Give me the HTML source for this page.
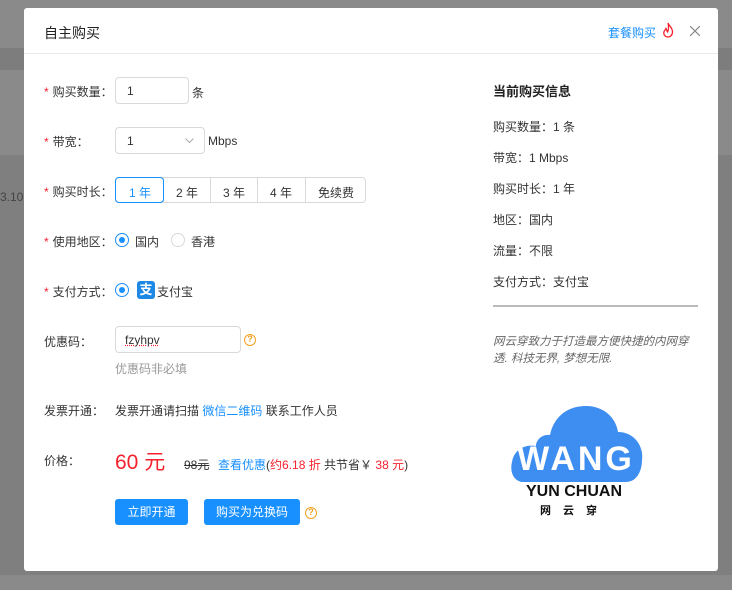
<!DOCTYPE html>
<html style="background:#8a8a8a"><head><meta charset="utf-8"><style>
*{box-sizing:border-box;margin:0;padding:0}
body{width:732px;height:590px;overflow:hidden;background:#8a8a8a;font-family:"Liberation Sans","Noto Sans CJK SC",sans-serif;font-size:12px;color:#333;position:relative}
.a{position:absolute;white-space:nowrap}
.band{position:absolute;left:0;width:732px}
.m{position:absolute;left:24px;top:8px;width:694px;height:563px;background:#fff;border-radius:3px}
.st{color:#f5222d;margin-right:4px}
.box{position:absolute;border:1px solid #d9d9d9;border-radius:4px;background:#fff}
.blue{color:#1890ff}
.red{color:#f5222d}
.btn{position:absolute;background:#1890ff;color:#fff;border-radius:3px;text-align:center;line-height:26px;font-size:12px}
.q{position:absolute;width:12px;height:12px;border:1.5px solid #f0a020;border-radius:50%;color:#f0a020;font-size:9px;line-height:9px;text-align:center;font-weight:bold}
.r{color:#333;font-size:12px}
.rad{position:absolute;width:14px;height:14px;border:1px solid #1890ff;border-radius:50%;background:#fff}
</style></head><body>
<div class="band" style="top:48px;height:22px;background:#7d7d7d"></div>
<div class="band" style="top:155px;height:420px;background:#7f7f7f"></div>
<div class="a" style="left:0;top:190px;color:#444;font-size:12px">3.10</div>
<div class="m">
 <div class="a" style="left:20px;top:15px;font-size:14px;color:#222">自主购买</div>
 <div class="a blue" style="left:584px;top:16px">套餐购买</div>
 <svg class="a" style="left:637px;top:14px" width="14" height="16" viewBox="0 0 14 16"><path d="M7 1C8 4 12 6 11.5 10.5C11 14 8.5 15 7 15C4.5 15 2.5 13 2.8 10.5C3 8.5 4.5 8 5 6.5C6 8 6 9.5 6.5 10C7.5 8 8 5 7 1Z" fill="none" stroke="#f5222d" stroke-width="1.3"/></svg>
 <svg class="a" style="left:666px;top:18px" width="10" height="10"><path d="M0 0L10 10M10 0L0 10" stroke="#888" stroke-width="1.2"/></svg>
 <div class="a" style="left:0;top:45px;width:694px;height:1px;background:#e8e8e8"></div>

 <div class="a" style="left:20px;top:75px"><span class="st">*</span>购买数量：</div>
 <div class="box" style="left:91px;top:69px;width:74px;height:27px"></div>
 <div class="a" style="left:103px;top:76px">1</div>
 <div class="a" style="left:168px;top:76px">条</div>

 <div class="a" style="left:20px;top:125px"><span class="st">*</span>带宽：</div>
 <div class="box" style="left:91px;top:119px;width:90px;height:27px"></div>
 <div class="a" style="left:103px;top:126px">1</div>
 <svg class="a" style="left:161px;top:130px" width="9" height="6"><path d="M0.5 0.5L4.5 4.5L8.5 0.5" fill="none" stroke="#aaa"/></svg>
 <div class="a" style="left:184px;top:126px">Mbps</div>

 <div class="a" style="left:20px;top:175px"><span class="st">*</span>购买时长：</div>
 <div class="box" style="left:91px;top:169px;width:251px;height:26px;border-radius:4px"></div>
 <div class="a" style="left:139px;top:170px;width:1px;height:24px;background:#d9d9d9"></div>
 <div class="a" style="left:186px;top:170px;width:1px;height:24px;background:#d9d9d9"></div>
 <div class="a" style="left:233px;top:170px;width:1px;height:24px;background:#d9d9d9"></div>
 <div class="a" style="left:281px;top:170px;width:1px;height:24px;background:#d9d9d9"></div>
 <div class="box" style="left:91px;top:169px;width:49px;height:26px;border-color:#1890ff;background:transparent"></div>
 <div class="a blue" style="left:105px;top:176px">1 年</div>
 <div class="a" style="left:152px;top:176px">2 年</div>
 <div class="a" style="left:199px;top:176px">3 年</div>
 <div class="a" style="left:246px;top:176px">4 年</div>
 <div class="a" style="left:294px;top:176px">免续费</div>

 <div class="a" style="left:20px;top:225px"><span class="st">*</span>使用地区：</div>
 <div class="rad" style="left:91px;top:225px"></div>
 <div class="a" style="left:95px;top:229px;width:6px;height:6px;background:#1890ff;border-radius:50%"></div>
 <div class="a" style="left:111px;top:225px">国内</div>
 <div class="rad" style="left:147px;top:225px;border-color:#d9d9d9"></div>
 <div class="a" style="left:167px;top:225px">香港</div>

 <div class="a" style="left:20px;top:275px"><span class="st">*</span>支付方式：</div>
 <div class="rad" style="left:91px;top:275px"></div>
 <div class="a" style="left:95px;top:279px;width:6px;height:6px;background:#1890ff;border-radius:50%"></div>
 <div class="a" style="left:113px;top:273px;width:18px;height:18px;background:#1e88e5;border-radius:3px;color:#fff;font-size:13px;line-height:18px;text-align:center;font-weight:bold">支</div>
 <div class="a" style="left:133px;top:275px">支付宝</div>

 <div class="a" style="left:20px;top:325px">优惠码：</div>
 <div class="box" style="left:91px;top:318px;width:126px;height:27px"></div>
 <div class="a" style="left:101px;top:325px;text-decoration:underline dotted #f5222d">fzyhpv</div>
 <div class="q" style="left:220px;top:326px">?</div>
 <div class="a" style="left:91px;top:352px;color:#999">优惠码非必填</div>

 <div class="a" style="left:20px;top:394px">发票开通：</div>
 <div class="a" style="left:91px;top:394px">发票开通请扫描 <span class="blue">微信二维码</span> 联系工作人员</div>

 <div class="a" style="left:20px;top:444px">价格：</div>
 <div class="a red" style="left:91px;top:438px;font-size:21px">60 元</div>
 <div class="a" style="left:160px;top:448px;text-decoration:line-through">98元</div>
 <div class="a" style="left:194px;top:448px"><span class="blue">查看优惠</span>(<span class="red">约6.18 折</span> 共节省￥ <span class="red">38 元</span>)</div>

 <div class="btn" style="left:91px;top:491px;width:73px">立即开通</div>
 <div class="btn" style="left:180px;top:491px;width:96px">购买为兑换码</div>
 <div class="q" style="left:281px;top:499px">?</div>

 <div class="a" style="left:469px;top:73px;font-size:13px;font-weight:bold;color:#222">当前购买信息</div>
 <div class="a r" style="left:469px;top:110px">购买数量：1 条</div>
 <div class="a r" style="left:469px;top:141px">带宽：1 Mbps</div>
 <div class="a r" style="left:469px;top:172px">购买时长：1 年</div>
 <div class="a r" style="left:469px;top:203px">地区：国内</div>
 <div class="a r" style="left:469px;top:234px">流量：不限</div>
 <div class="a r" style="left:469px;top:265px">支付方式：支付宝</div>
 <div class="a" style="left:469px;top:297px;width:205px;height:2px;background:#bbb"></div>
 <div class="a" style="left:469px;top:326px;font-style:italic;color:#666;font-size:11.5px;line-height:17px;white-space:normal;width:210px">网云穿致力于打造最方便快捷的内网穿透. 科技无界, 梦想无限.</div>

 <svg class="a" style="left:486px;top:396px" width="134" height="80" viewBox="0 0 134 80">
  <path d="M12 78C2 76 0 66 2 58C4 46 14 40 26 42C26 36 32 30 40 31C44 12 58 2 76 2C94 2 106 14 108 28C124 28 134 42 132 56C132 68 126 78 116 78Z" fill="#3d8ef0"/>
  <text x="66" y="66" text-anchor="middle" font-family="Liberation Sans" font-weight="bold" font-size="34" fill="#fff" letter-spacing="3">WANG</text>
 </svg>
 <div class="a" style="left:502px;top:475px;font-size:16px;font-weight:bold;color:#111">YUN CHUAN</div>
 <div class="a" style="left:516px;top:494px;font-size:11px;font-weight:bold;color:#111;letter-spacing:12px">网云穿</div>
</div>
</body></html>
